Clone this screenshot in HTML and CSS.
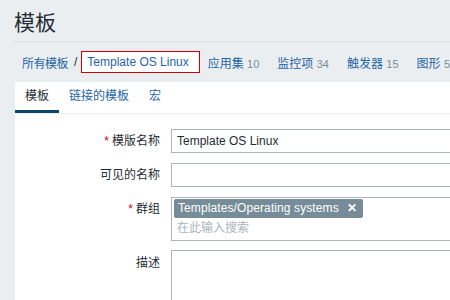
FILE: index.html
```html
<!DOCTYPE html>
<html lang="zh">
<head>
    <meta charset="UTF-8">
    <title>模板</title>
    <link rel="stylesheet" href="styles.css">
</head>
<body>
<div class="wrap">
    <div class="header">
        <h1>模板</h1>
    </div>
    <ul class="nav">
        <li><a href="#">所有模板</a></li>
        <li class="sep">/</li>
        <li><a href="#" class="current">Template OS Linux</a></li>
        <li class="item"><a href="#">应用集</a> <span class="count">10</span></li>
        <li class="item"><a href="#">监控项</a> <span class="count">34</span></li>
        <li class="item"><a href="#">触发器</a> <span class="count">15</span></li>
        <li class="item"><a href="#">图形</a> <span class="count">5</span></li>
    </ul>
    <div class="panel">
        <ul class="tabs">
            <li class="active">模板</li>
            <li><a href="#">链接的模板</a></li>
            <li><a href="#">宏</a></li>
        </ul>
        <div class="form">
            <label class="req">模版名称</label>
            <div><input class="text" type="text" value="Template OS Linux"></div>
            <label>可见的名称</label>
            <div><input class="text" type="text" value=""></div>
            <label class="req">群组</label>
            <div class="multi">
                <span class="tag">Templates/Operating systems <b>&#10005;</b></span>
                <span class="hint">在此输入搜索</span>
            </div>
            <label>描述</label>
            <div><div class="area"></div></div>
        </div>
    </div>
</div>
</body>
</html>
```
FILE: styles.css
```css
*{
    margin: 0;
    padding: 0;
    list-style: none;
    box-sizing: border-box;
}
html{
    overflow: hidden;
}
body{
    background: #ebeef0;
    font-family: "Liberation Sans", Arial, "Noto Sans CJK SC", sans-serif;
    font-size: 12px;
    color: #1f2c33;
}
a{
    color: #1f65a6;
    text-decoration: none;
}
.wrap{
    padding-left: 15px;
}
.header{
    border-bottom: 1px solid #dde2e5;
}
.header h1{
    font-size: 21px;
    font-weight: normal;
    line-height: 27px;
    padding: 9px 0 5px;
    margin-left: -1px;
}
.nav{
    display: flex;
    align-items: center;
    height: 40px;
    padding-left: 7px;
    white-space: nowrap;
}
.nav li:first-child{
    letter-spacing: -0.5px;
}
.nav .sep{
    margin: 0 4px 0 6px;
    color: #1f2c33;
}
.nav .current{
    display: block;
    border: 1px solid #d40000;
    background: #fff;
    line-height: 20px;
    padding: 0 10px 0 5px;
}
.nav .item{
    margin-left: 18px;
}
.nav .item:nth-child(4){
    margin-left: 8px;
}
.count{
    color: #768d99;
    font-size: 11px;
}
.panel{
    background: #fff;
    height: 300px;
}
.tabs{
    display: flex;
    border-bottom: 1px solid #ebeef0;
}
.tabs li{
    padding: 0 10px;
    line-height: 28px;
    border-bottom: 3px solid transparent;
}
.tabs li.active{
    border-bottom-color: #0a466a;
    color: #1f2c33;
}
.form{
    display: grid;
    grid-template-columns: 145px 340px;
    column-gap: 11px;
    row-gap: 10px;
    padding-top: 15px;
}
.form label{
    text-align: right;
    line-height: 24px;
}
.form label.req::before{
    content: "*";
    color: #d40000;
    margin-right: 3px;
}
.text{
    display: block;
    width: 100%;
    height: 24px;
    border: 1px solid #acb4b9;
    padding: 0 5px;
    font-family: inherit;
    font-size: 12px;
    color: #1f2c33;
    background: #fff;
}
.multi{
    border: 1px solid #acb4b9;
    height: 44px;
    padding: 1px 2px;
}
.tag{
    display: inline-block;
    background: #768d99;
    color: #fff;
    border-radius: 2px;
    line-height: 19px;
    padding: 0 6px 0 4px;
    letter-spacing: 0.1px;
}
.tag b{
    margin-left: 5px;
    font-size: 12px;
}
.hint{
    display: block;
    color: #acb4b9;
    line-height: 20px;
    padding-left: 3px;
}
.area{
    border: 1px solid #acb4b9;
    height: 80px;
    margin-top: -1px;
}
```
